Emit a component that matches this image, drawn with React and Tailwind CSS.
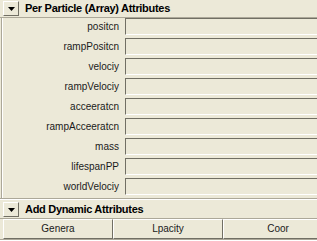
import React from 'react';

const ROWS = [
  'positcn',
  'rampPositcn',
  'velociy',
  'rampVelociy',
  'acceeratcn',
  'rampAcceeratcn',
  'mass',
  'lifespanPP',
  'worldVelociy',
];

const BUTTONS = ['Genera', 'Lpacity', 'Coor'];

function Toggle() {
  return (
    <div className="w-[16px] h-[15px] flex items-center justify-center border border-t-white border-l-white border-r-[#716f64] border-b-[#716f64] bg-[#ece9d8]">
      <svg width="7" height="4" viewBox="0 0 7 4">
        <path d="M0 0h7L3.5 4z" fill="#000" />
      </svg>
    </div>
  );
}

function SectionHeader({ title }) {
  return (
    <div className="h-[17px] flex items-center gap-[6px] pl-[3px]">
      <Toggle />
      <span className="text-[11px] font-bold tracking-[-0.3px] text-black leading-none">{title}</span>
    </div>
  );
}

export default function App() {
  return (
    <div className="w-[317px] h-[241px] overflow-hidden bg-[#ece9d8] font-['Liberation_Sans',sans-serif] select-none">
      <div className="w-[340px]">
        <div className="border-b border-[#aca899]">
          <SectionHeader title="Per Particle (Array) Attributes" />
        </div>

        <div className="ml-[1px] border-l border-[#aca899] pl-[1px] shadow-[inset_1px_0_0_#fff]">
          {ROWS.map((label) => (
            <div key={label} className="h-[20px] flex items-start">
              <div className="w-[120px] h-[17px] flex items-center justify-end pr-[4px] text-[10px] text-[#1a1a1a] leading-none">
                {label}
              </div>
              <div className="flex-1 h-[17px] ml-[2px] border border-t-[#716f64] border-l-[#716f64] border-r-white border-b-white bg-[#ece9d8]" />
            </div>
          ))}
        </div>

        <div className="border-b border-[#aca899] shadow-[0_1px_0_#fff]" />

        <div className="pt-[2px]">
          <SectionHeader title="Add Dynamic Attributes" />
        </div>

        <div className="border-t border-[#aca899] flex pl-[3px] h-[21px]">
          {BUTTONS.map((b) => (
            <div
              key={b}
              className="w-[110px] h-[20px] flex items-center justify-center border border-t-white border-l-white border-r-[#716f64] border-b-[#716f64] text-[10px] text-[#1a1a1a] leading-none"
            >
              {b}
            </div>
          ))}
        </div>
        <div className="border-t border-[#aca899] shadow-[0_1px_0_#fff]" />
      </div>
    </div>
  );
}
